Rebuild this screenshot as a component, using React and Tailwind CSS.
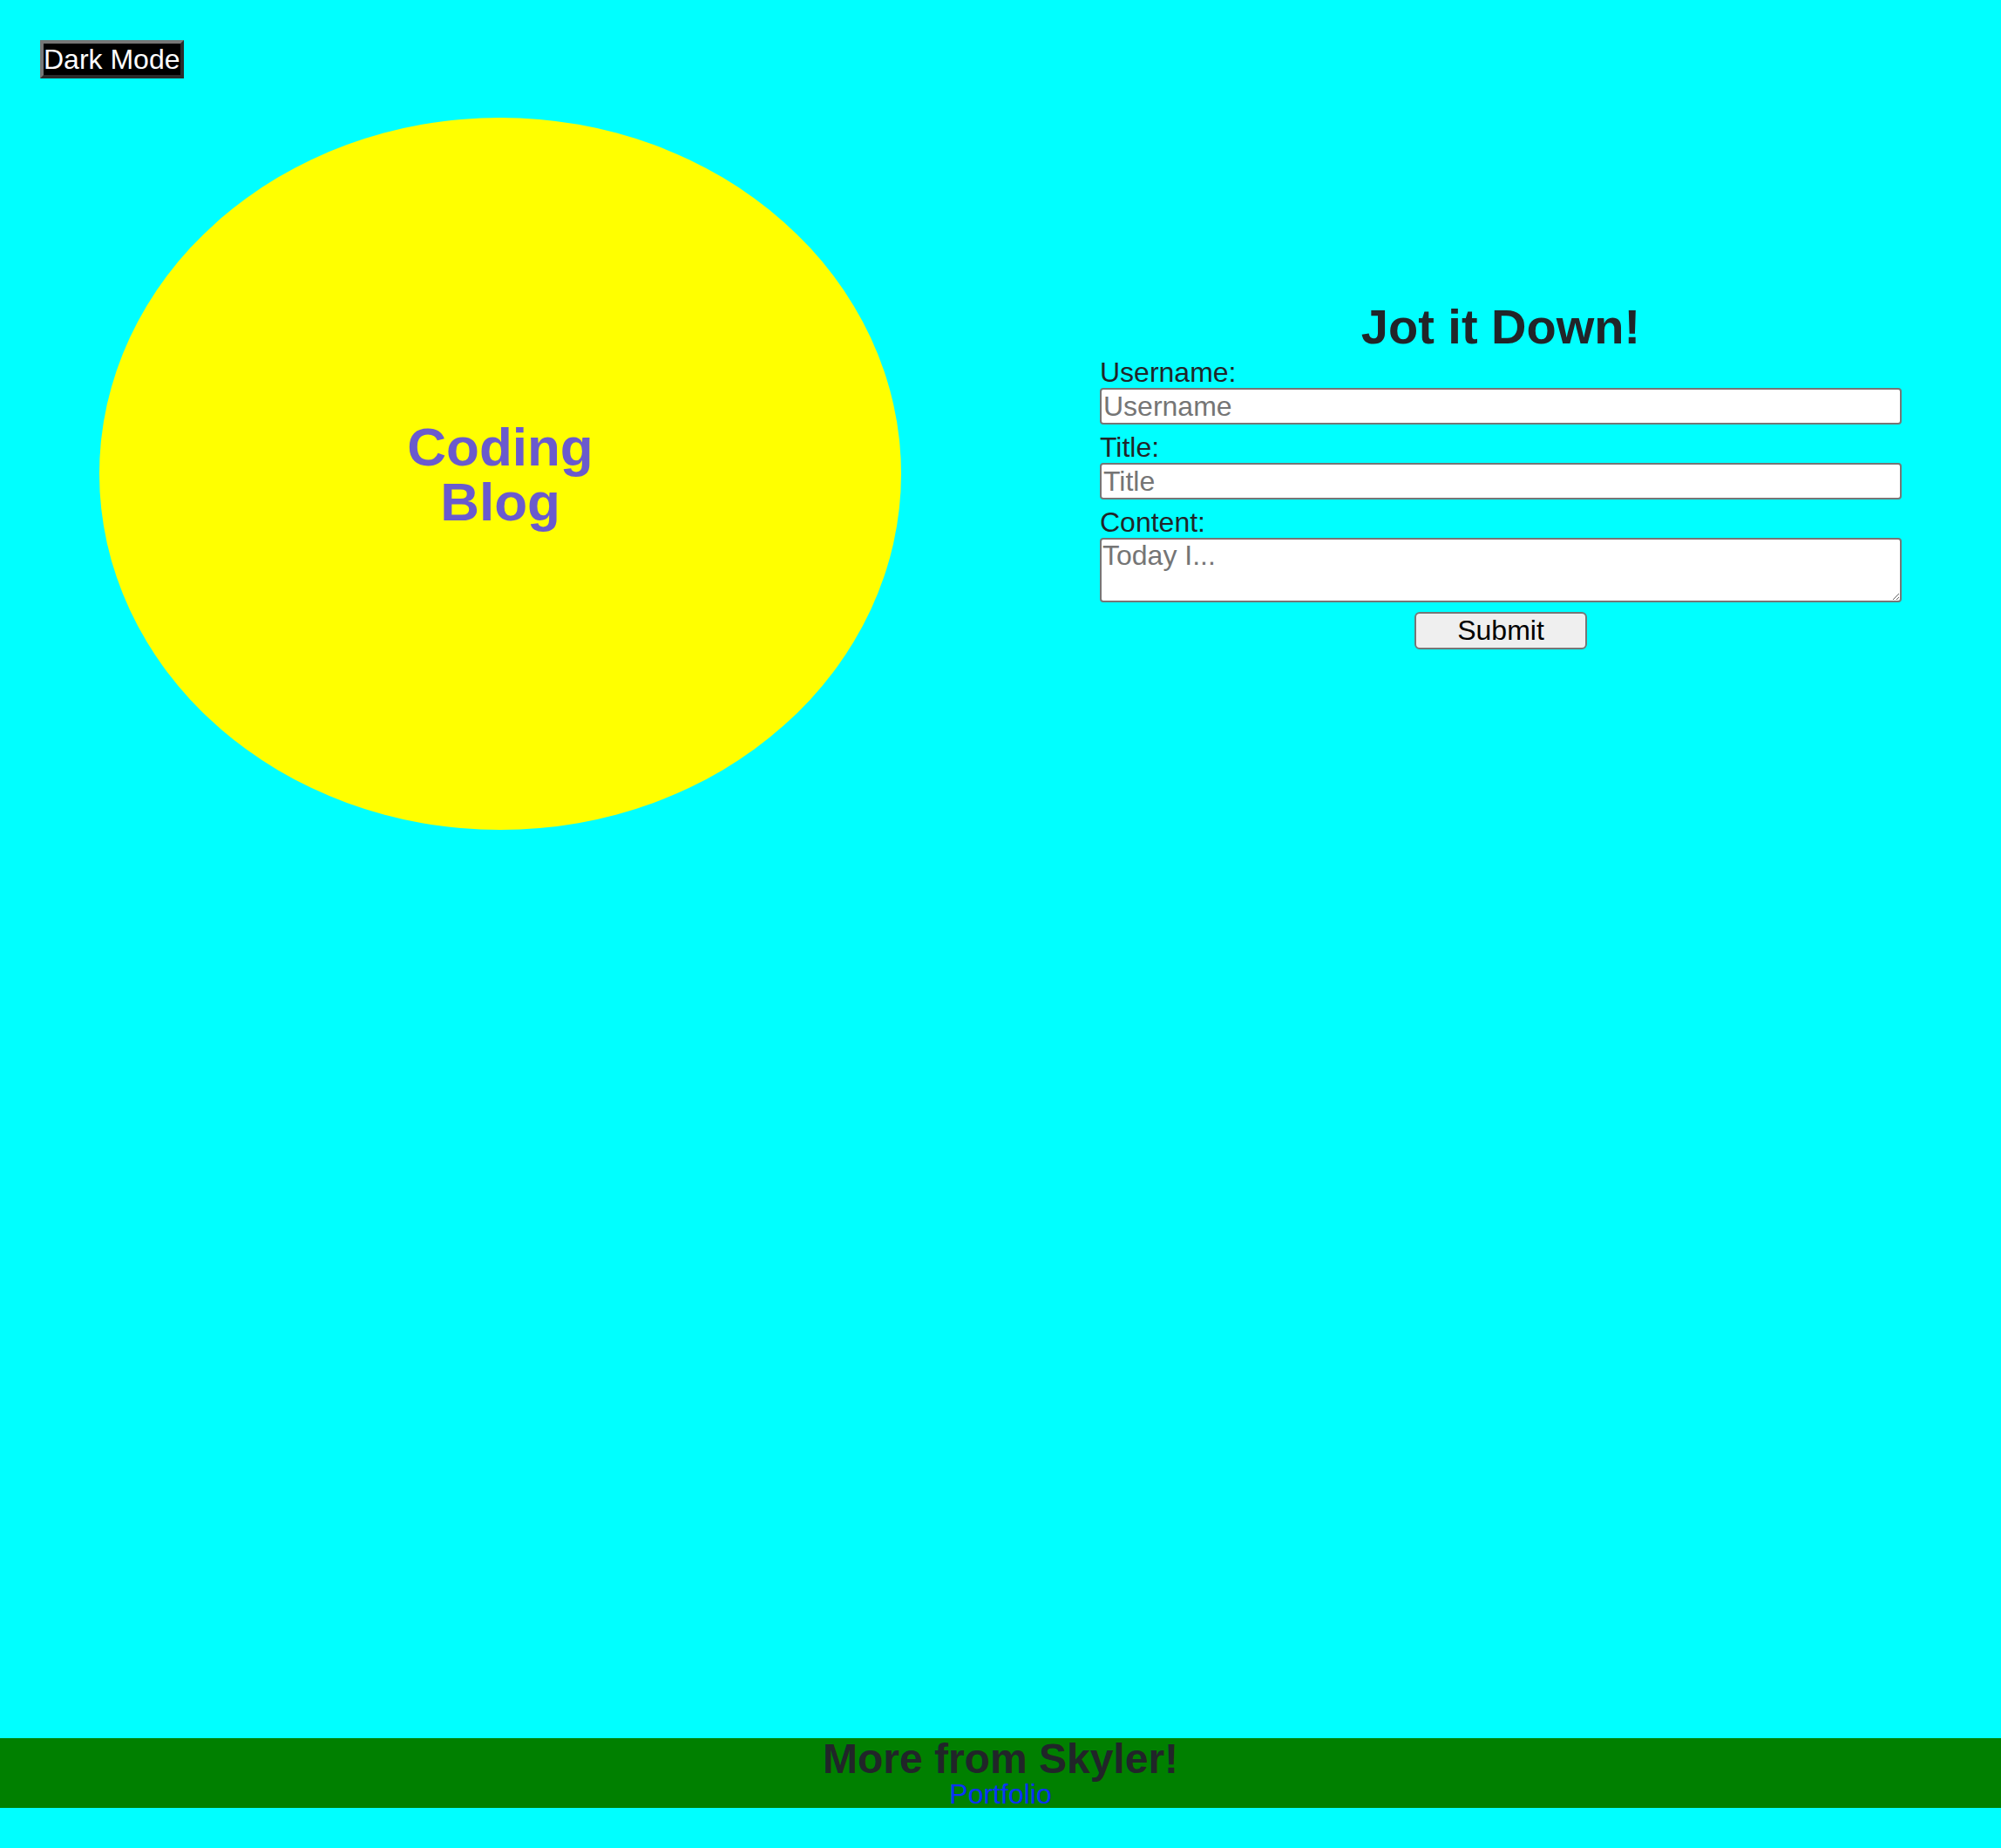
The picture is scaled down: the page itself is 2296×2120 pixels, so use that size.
import { useState } from "react";

export default function App() {
  const [username, setUsername] = useState("");
  const [title, setTitle] = useState("");
  const [content, setContent] = useState("");

  return (
    <div className="min-h-screen flex flex-col bg-[#00ffff] font-['Liberation_Sans',Arial,sans-serif] text-[32px] text-[#212529]">
      {/* top bar */}
      <div className="flex pt-[46px] pl-[46px]">
        <button className="bg-black text-white text-[32px] leading-[36px] px-0 border-4 border-t-[#767676] border-l-[#767676] border-b-[#2b2b2b] border-r-[#2b2b2b]">
          Dark Mode
        </button>
      </div>

      <main className="grid grid-cols-2 items-center mt-[45px]">
        {/* logo */}
        <div className="flex justify-center">
          <div className="w-[920px] h-[817px] rounded-[50%] bg-[#ffff00] flex items-center justify-center text-center">
            <h1 className="text-[62px] leading-[63px] font-bold text-[#6a5acd]">
              Coding
              <br />
              Blog
            </h1>
          </div>
        </div>

        {/* post form */}
        <div className="flex justify-center">
          <form className="w-[920px] flex flex-col" onSubmit={(e) => e.preventDefault()}>
            <h1 className="text-center text-[56px] leading-[64px] font-bold mb-[2px]">Jot it Down!</h1>

            <label htmlFor="username" className="leading-[36px]">Username:</label>
            <input
              id="username"
              value={username}
              onChange={(e) => setUsername(e.target.value)}
              placeholder="Username"
              className="h-[42px] bg-white border-2 border-[#767676] rounded-[4px] px-[2px] text-[32px] text-black placeholder:text-[#757575]"
            />

            <label htmlFor="title" className="leading-[36px] mt-[8px]">Title:</label>
            <input
              id="title"
              value={title}
              onChange={(e) => setTitle(e.target.value)}
              placeholder="Title"
              className="h-[42px] bg-white border-2 border-[#767676] rounded-[4px] px-[2px] text-[32px] text-black placeholder:text-[#757575]"
            />

            <label htmlFor="content" className="leading-[36px] mt-[8px]">Content:</label>
            <textarea
              id="content"
              value={content}
              onChange={(e) => setContent(e.target.value)}
              placeholder="Today I..."
              className="h-[74px] bg-white border-2 border-[#767676] rounded-[4px] px-[1px] text-[32px] leading-[36px] text-black placeholder:text-[#757575]"
            />

            <button
              type="submit"
              className="self-center mt-[11px] w-[198px] h-[43px] bg-[#efefef] border-2 border-[#767676] rounded-[6px] text-[32px] leading-[36px] text-black"
            >
              Submit
            </button>
          </form>
        </div>
      </main>

      <footer className="mt-auto mb-[46px] bg-[#008000] text-center">
        <h2 className="text-[48px] leading-[48px] font-bold">More from Skyler!</h2>
        <a href="#" className="block text-[32px] leading-[32px] text-[#0a32ff]">Portfolio</a>
      </footer>
    </div>
  );
}
